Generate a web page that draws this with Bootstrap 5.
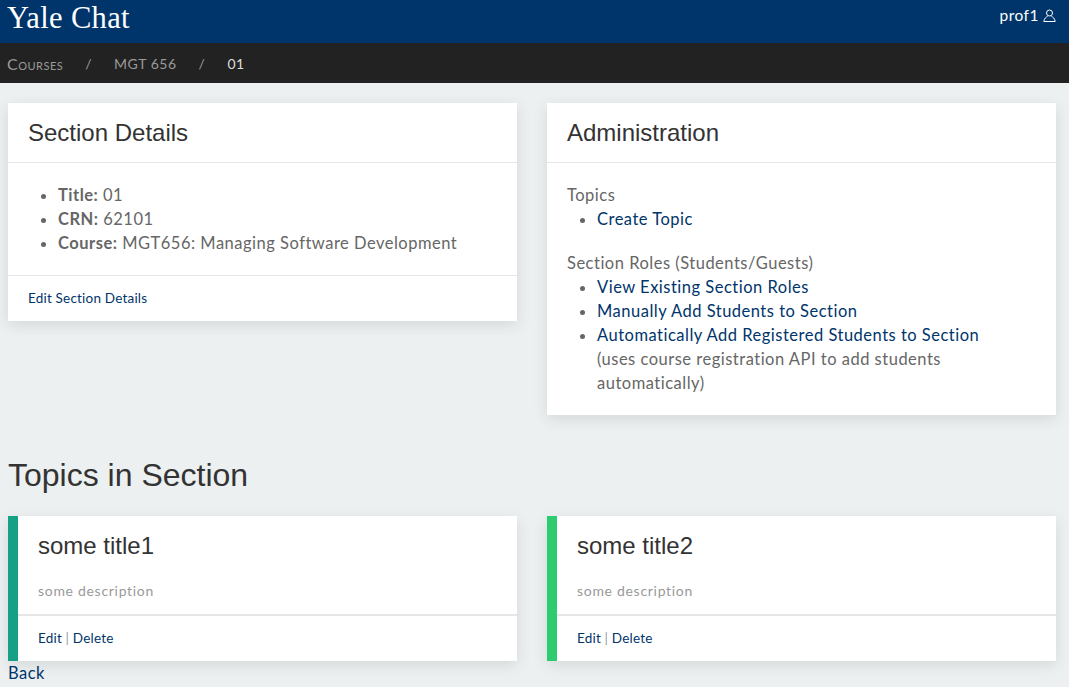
<!DOCTYPE html>
<html lang="en">
<head>
    <meta charset="UTF-8">
    <meta name="viewport" content="width=device-width, initial-scale=1.0">
    <title>Yale Chat</title>
    <link rel="stylesheet" href="https://cdn.jsdelivr.net/npm/bootstrap@5.3.0/dist/css/bootstrap.min.css">
    <style>
        body { background: #ecf0f1; color: #666; font-family: Lato, "Noto Sans", sans-serif; font-size: 16.5px; line-height: 24px; letter-spacing: .5px; }
        a { color: #00356b; text-decoration: none; }
        .yale-bar { background: #00356b; height: 43px; padding: 0 13px 0 7px; }
        .yale-brand { font-family: "Liberation Serif", serif; font-size: 30.5px; line-height: 36px; color: #fff; letter-spacing: .35px; }
        .yale-user { color: #fff; font-size: 15.5px; line-height: 30px; letter-spacing: .5px; }
        .crumb-bar { background: #222; height: 40px; padding: 1px 7px 0; font-size: 14px; color: #9a9a9a; }
        .crumb-sep { margin: 0 22px; }
        .crumb-courses { font-variant: small-caps; font-size: 16px; }
        .crumb-now { color: #ddd; }
        .page-wrap { padding: 20px 13px 0 8px; }
        .page-grid { --bs-gutter-x: 30px; --bs-gutter-y: 0; }
        .panel { background: #fff; border: 0; border-radius: 0; box-shadow: 0 4px 14px rgba(0,0,0,.1); }
        .panel .card-header { background: #fff; padding: 15px 20px 14px; border-bottom: 1px solid #e6e6e6; border-radius: 0; }
        .panel h5 { font-family: "Liberation Sans", sans-serif; font-size: 24px; line-height: 30px; margin: 0; color: #333; letter-spacing: 0; }
        .panel .card-body { padding: 20px; }
        .panel .card-footer { background: #fff; padding: 10px 20px 11px; border-top: 1px solid #e6e6e6; border-radius: 0; font-size: 13.5px; letter-spacing: .2px; }
        .panel ul { margin: 0; padding-left: 30px; }
        .panel p { margin: 0; }
        .roles-title { margin-top: 20px !important; }
        .topics-title { font-family: "Liberation Sans", sans-serif; font-size: 32px; line-height: 40px; color: #333; margin: 40px 0 21px; letter-spacing: 0; }
        .topic-one { border-left: 10px solid #16a085; }
        .topic-two { border-left: 10px solid #2ecc71; }
        .topic-one .card-body, .topic-two .card-body { padding: 15px 20px 11px; border-bottom: 2px solid #e6e6e6; }
        .topic-one .card-footer, .topic-two .card-footer { border-top: 0; }
        .topic-desc { font-size: 14px; letter-spacing: .7px; color: #999; margin-top: 18px !important; }
        .sep-line { color: #999; }
    </style>
</head>
<body>
<nav class="yale-bar d-flex justify-content-between align-items-start">
    <span class="yale-brand">Yale Chat</span>
    <span class="yale-user d-flex align-items-center gap-1">prof1
        <svg width="13" height="13" viewBox="0 0 13 13" fill="none" stroke="#fff" stroke-width="1"><circle cx="6.5" cy="4" r="3"/><path d="M.8 12.5c.4-3 2.4-4.6 3.7-5M12.2 12.5c-.4-3-2.4-4.6-3.7-5M.8 12.5h11.4"/></svg>
    </span>
</nav>
<div class="crumb-bar d-flex align-items-center">
    <span class="crumb-courses">Courses</span><span class="crumb-sep">/</span><span>MGT 656</span><span class="crumb-sep">/</span><span class="crumb-now">01</span>
</div>
<main class="page-wrap">
    <div class="row page-grid align-items-start">
        <div class="col-6">
            <div class="card panel">
                <div class="card-header"><h5>Section Details</h5></div>
                <div class="card-body">
                    <ul>
                        <li><b>Title:</b> 01</li>
                        <li><b>CRN:</b> 62101</li>
                        <li><b>Course:</b> MGT656: Managing Software Development</li>
                    </ul>
                </div>
                <div class="card-footer"><a href="#">Edit Section Details</a></div>
            </div>
        </div>
        <div class="col-6">
            <div class="card panel">
                <div class="card-header"><h5>Administration</h5></div>
                <div class="card-body">
                    <p>Topics</p>
                    <ul>
                        <li><a href="#">Create Topic</a></li>
                    </ul>
                    <p class="roles-title">Section Roles (Students/Guests)</p>
                    <ul>
                        <li><a href="#">View Existing Section Roles</a></li>
                        <li><a href="#">Manually Add Students to Section</a></li>
                        <li><a href="#">Automatically Add Registered Students to Section</a><br>(uses course registration API to add students automatically)</li>
                    </ul>
                </div>
            </div>
        </div>
    </div>
    <h2 class="topics-title">Topics in Section</h2>
    <div class="row page-grid">
        <div class="col-6">
            <div class="card panel topic-one">
                <div class="card-body">
                    <h5>some title1</h5>
                    <p class="topic-desc">some description</p>
                </div>
                <div class="card-footer"><a href="#">Edit</a> <span class="sep-line">|</span> <a href="#">Delete</a></div>
            </div>
        </div>
        <div class="col-6">
            <div class="card panel topic-two">
                <div class="card-body">
                    <h5>some title2</h5>
                    <p class="topic-desc">some description</p>
                </div>
                <div class="card-footer"><a href="#">Edit</a> <span class="sep-line">|</span> <a href="#">Delete</a></div>
            </div>
        </div>
    </div>
    <a href="#">Back</a>
</main>
<script src="https://cdn.jsdelivr.net/npm/bootstrap@5.3.0/dist/js/bootstrap.bundle.min.js"></script>
</body>
</html>
